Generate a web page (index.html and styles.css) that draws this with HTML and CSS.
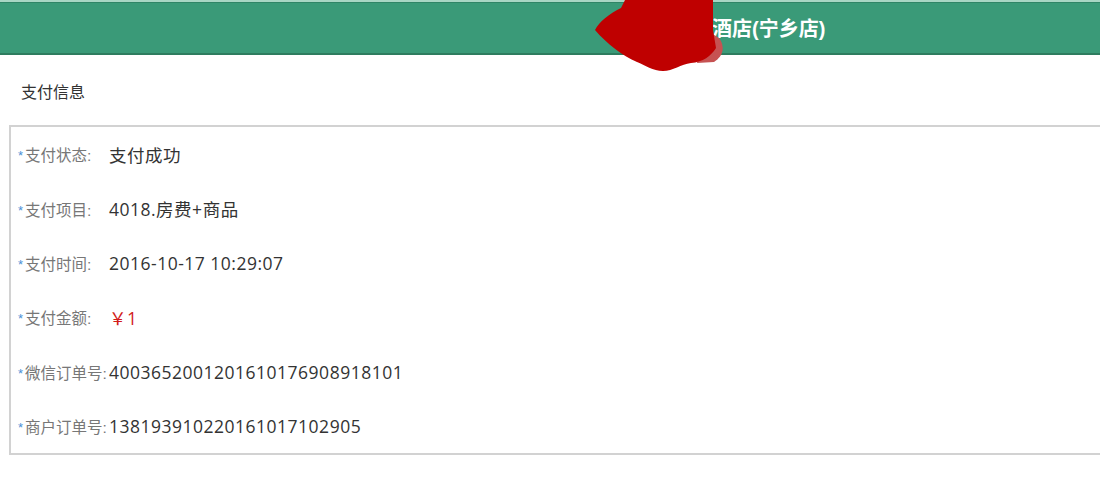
FILE: index.html
```html
<!DOCTYPE html>
<html lang="zh-CN">

<head>
    <meta charset="UTF-8">
    <meta name="viewport" content="width=device-width, initial-scale=1.0">
    <title>支付信息</title>
    <link rel="stylesheet" href="styles.css">
</head>

<body>
    <header class="topbar">
        <h1 class="shop-name">酒店(宁乡店)</h1>
        <!-- redacted hotel name -->
        <svg class="blot" width="135" height="74" viewBox="0 0 135 74">
            <path fill="#c65252" d="M108,28 L124,38 C130,46 129,56 119,62 L102,63 Z" />
            <path fill="#bf0000" d="M0,30 C4,22 14,14 26,8 L30,0 L118,0 L118,30 L121,48 C116,56 108,62 96,63 C86,64 78,71 68,71 C58,71 50,65 42,62 C28,56 12,44 0,30 Z" />
        </svg>
    </header>

    <div class="section-title">支付信息</div>

    <div class="info-box">
        <div class="row">
            <span class="label"><i>*</i>支付状态:</span>
            <span class="value">支付成功</span>
        </div>
        <div class="row">
            <span class="label"><i>*</i>支付项目:</span>
            <span class="value">4018.房费+商品</span>
        </div>
        <div class="row">
            <span class="label"><i>*</i>支付时间:</span>
            <span class="value">2016-10-17 10:29:07</span>
        </div>
        <div class="row">
            <span class="label"><i>*</i>支付金额:</span>
            <span class="value price">￥1</span>
        </div>
        <div class="row">
            <span class="label"><i>*</i>微信订单号:</span>
            <span class="value">4003652001201610176908918101</span>
        </div>
        <div class="row">
            <span class="label"><i>*</i>商户订单号:</span>
            <span class="value">138193910220161017102905</span>
        </div>
    </div>
</body>

</html>
```

FILE: styles.css
```css
body {
    margin: 0;
    padding: 0;
    background: #fff;
    font-family: "Liberation Sans", "Noto Sans CJK SC", sans-serif;
    color: #333;
}

.topbar {
    position: relative;
    height: 50px;
    margin-top: 2px;
    background-color: #3a9a78;
    border-top: 1px solid #2f8566;
    border-bottom: 2px solid #2e7c5f;
    box-shadow: 0 -2px 0 #a8d6c4;
    display: flex;
    align-items: center;
}

.shop-name {
    margin: 0 0 2px 712px;
    font-size: 20px;
    font-weight: bold;
    color: #fff;
}

.blot {
    position: absolute;
    top: -3px;
    left: 595px;
}

.section-title {
    margin: 27px 0 0 21px;
    font-size: 16px;
    line-height: 22px;
    color: #333;
}

.info-box {
    margin: 21px 0 0 9px;
    border: 2px solid #d2d2d2;
    border-right: none;
    padding: 0;
}

.row {
    display: flex;
    align-items: center;
    height: 54.4px;
    padding-left: 7px;
}

.label {
    display: inline-block;
    min-width: 91px;
    font-size: 15.5px;
    color: #777;
}

.label i {
    font-style: normal;
    font-size: 13px;
    color: #4a8fd6;
    margin-right: 2px;
    vertical-align: 1px;
}

.value {
    font-family: "Open Sans", "Noto Sans CJK SC", sans-serif;
    font-size: 17.5px;
    letter-spacing: 0.5px;
    color: #333;
}

.price {
    color: #d21a1a;
}
```
